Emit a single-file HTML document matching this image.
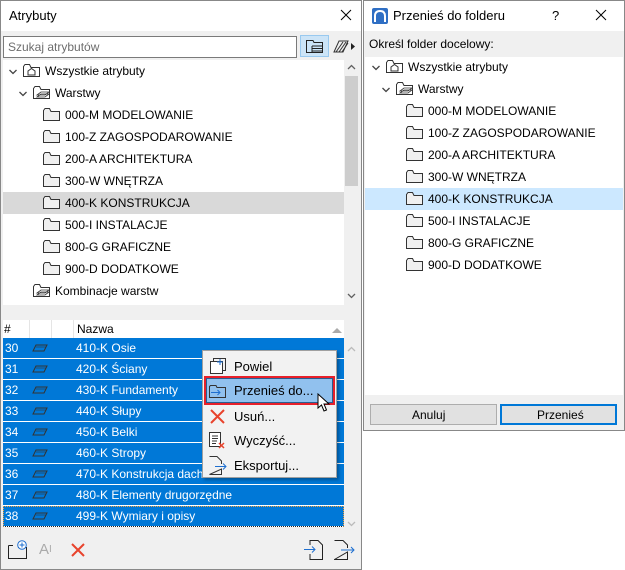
<!DOCTYPE html>
<html><head><meta charset="utf-8"><style>
*{margin:0;padding:0;box-sizing:border-box}
body{width:625px;height:570px;background:#fff;position:relative;overflow:hidden;font-family:"Liberation Sans",sans-serif;font-size:12px;color:#000}
.a{position:absolute}
.t{position:absolute;white-space:nowrap;line-height:14px}
.fold{position:absolute;width:17px;height:13px}
</style></head><body>
<svg width="0" height="0" style="position:absolute"><defs>
<symbol id="f" viewBox="0 0 17 13"><path d="M0.5 2.5V12.5H16.5V3.5H8L6.5 0.5H2L0.5 2.5Z" fill="#f0f0f0" stroke="#333"/></symbol>
<symbol id="fh" viewBox="0 0 17 13"><path d="M0.5 2.5V12.5H16.5V3.5H8L6.5 0.5H2L0.5 2.5Z" fill="#fff" stroke="#333"/><path d="M5 11V7L8.5 4.5L12 7V11Z" fill="none" stroke="#333"/></symbol>
<symbol id="fw" viewBox="0 0 17 13"><path d="M0.5 2.5V12.5H16.5V3.5H8L6.5 0.5H2L0.5 2.5Z" fill="#fff" stroke="#333"/><path d="M4 9L8 6H16L12 9ZM4 11L8 8H16L12 11Z" fill="#fff" stroke="#333" stroke-width=".8"/></symbol>
<symbol id="ch" viewBox="0 0 10 10"><path d="M1.5 3L5 6.5L8.5 3" fill="none" stroke="#444" stroke-width="1.3"/></symbol>
<symbol id="ly" viewBox="0 0 16 8"><path d="M4 1H15L12 7H1Z" fill="none" stroke="#333" stroke-width="1"/><path d="M4 3H14" stroke="#333" stroke-width=".6"/></symbol>
</defs></svg>

<!-- LEFT WINDOW -->
<div class="a" style="left:0;top:0;width:362px;height:570px;border:1px solid #888;background:#f0f0f0"></div>
<div class="a" style="left:1;top:1px;left:1px;width:360px;height:30px;background:#fff"></div>
<div class="t" style="left:9px;top:9px;font-size:13px">Atrybuty</div>
<svg class="a" style="left:340px;top:9px" width="12" height="12"><path d="M1 1L11 11M11 1L1 11" stroke="#000" stroke-width="1"/></svg>
<div class="a" style="left:3px;top:36px;width:294px;height:22px;background:#fff;border:1px solid #7a7a7a"></div>
<div class="t" style="left:8px;top:40px;color:#6d6d6d">Szukaj atrybutów</div>
<div class="a" style="left:300px;top:35px;width:29px;height:22px;background:#cce4f7;border:1px solid #99c9ef"></div>
<svg class="a" style="left:306px;top:39px" width="18" height="15"><path d="M0.5 1.5V13.5H16.5V3.5H8L7 1.5Z" fill="none" stroke="#222"/><path d="M6 7H16M6 9.5H16M6 12H16M6 7V13" stroke="#222"/></svg>
<svg class="a" style="left:333px;top:39px" width="28" height="15"><path d="M1 13L6 2H15L10 13Z" fill="none" stroke="#333"/><path d="M3 13L10 3M6 13L13 3M9 13L15 4" stroke="#333"/><path d="M18 4L22 7.5L18 11Z" fill="#222"/></svg>
<div class="a" style="left:3px;top:60px;width:341px;height:245px;background:#fff"></div>
<div class="a" style="left:344px;top:60px;width:15px;height:245px;background:#f0f0f0"></div>
<div class="a" style="left:345px;top:76px;width:13px;height:110px;background:#cdcdcd"></div>
<svg class="a" style="left:347px;top:64px" width="9" height="7"><path d="M1 5L4.5 1.5L8 5" fill="none" stroke="#606060" stroke-width="1.3"/></svg>
<svg class="a" style="left:347px;top:292px" width="9" height="7"><path d="M1 2L4.5 5.5L8 2" fill="none" stroke="#606060" stroke-width="1.3"/></svg>
<div class="a" style="left:3px;top:192px;width:341px;height:22px;background:#d9d9d9"></div>

<svg class="a" style="left:8px;top:67px" width="10" height="10"><use href="#ch"/></svg>
<svg class="fold" style="left:23px;top:64px"><use href="#fh"/></svg>
<div class="t" style="left:45px;top:64px">Wszystkie atrybuty</div>
<svg class="a" style="left:18px;top:89px" width="10" height="10"><use href="#ch"/></svg>
<svg class="fold" style="left:33px;top:86px"><use href="#fw"/></svg>
<div class="t" style="left:55px;top:86px">Warstwy</div>
<svg class="fold" style="left:43px;top:108px"><use href="#f"/></svg><div class="t" style="left:65px;top:108px">000-M MODELOWANIE</div>
<svg class="fold" style="left:43px;top:130px"><use href="#f"/></svg><div class="t" style="left:65px;top:130px">100-Z ZAGOSPODAROWANIE</div>
<svg class="fold" style="left:43px;top:152px"><use href="#f"/></svg><div class="t" style="left:65px;top:152px">200-A ARCHITEKTURA</div>
<svg class="fold" style="left:43px;top:174px"><use href="#f"/></svg><div class="t" style="left:65px;top:174px">300-W WNĘTRZA</div>
<svg class="fold" style="left:43px;top:196px"><use href="#f"/></svg><div class="t" style="left:65px;top:196px">400-K KONSTRUKCJA</div>
<svg class="fold" style="left:43px;top:218px"><use href="#f"/></svg><div class="t" style="left:65px;top:218px">500-I INSTALACJE</div>
<svg class="fold" style="left:43px;top:240px"><use href="#f"/></svg><div class="t" style="left:65px;top:240px">800-G GRAFICZNE</div>
<svg class="fold" style="left:43px;top:262px"><use href="#f"/></svg><div class="t" style="left:65px;top:262px">900-D DODATKOWE</div>
<svg class="fold" style="left:33px;top:284px"><use href="#fw"/></svg><div class="t" style="left:55px;top:284px">Kombinacje warstw</div>

<!-- table -->
<div class="a" style="left:3px;top:320px;width:341px;height:207px;background:#fff"></div>
<div class="a" style="left:344px;top:320px;width:15px;height:207px;background:#f0f0f0"></div>
<svg class="a" style="left:347px;top:346px" width="9" height="7"><path d="M1 5L4.5 1.5L8 5" fill="none" stroke="#bbb" stroke-width="1.3"/></svg>
<svg class="a" style="left:347px;top:407px;top:438px" width="0" height="0"></svg>
<svg class="a" style="left:347px;top:520px" width="9" height="7"><path d="M1 2L4.5 5.5L8 2" fill="none" stroke="#bbb" stroke-width="1.3"/></svg>
<div class="a" style="left:29px;top:320px;width:1px;height:18px;background:#e5e5e5"></div>
<div class="a" style="left:51px;top:320px;width:1px;height:18px;background:#e5e5e5"></div>
<div class="a" style="left:73px;top:320px;width:1px;height:18px;background:#e5e5e5"></div>
<div class="t" style="left:4px;top:322px">#</div>
<div class="t" style="left:77px;top:322px">Nazwa</div>
<svg class="a" style="left:332px;top:327px" width="10" height="6"><path d="M0 6L5 1L10 6Z" fill="#aaa"/></svg>

<div id="rows"></div>
<div class="a" style="left:3px;top:338px;width:341px;height:189px;background:repeating-linear-gradient(#0078d7 0,#0078d7 20px,#fff 20px,#fff 21px)"></div>
<div class="a" style="left:3px;top:506px;width:341px;height:21px;border:1px dotted #f0a040;border-bottom-color:#222"></div>
<div style="color:#fff">
<div class="t" style="left:5px;top:341px;color:#fff">30</div><div class="t" style="left:76px;top:341px;color:#fff">410-K Osie</div>
<div class="t" style="left:5px;top:362px;color:#fff">31</div><div class="t" style="left:76px;top:362px;color:#fff">420-K Ściany</div>
<div class="t" style="left:5px;top:383px;color:#fff">32</div><div class="t" style="left:76px;top:383px;color:#fff">430-K Fundamenty</div>
<div class="t" style="left:5px;top:404px;color:#fff">33</div><div class="t" style="left:76px;top:404px;color:#fff">440-K Słupy</div>
<div class="t" style="left:5px;top:425px;color:#fff">34</div><div class="t" style="left:76px;top:425px;color:#fff">450-K Belki</div>
<div class="t" style="left:5px;top:446px;color:#fff">35</div><div class="t" style="left:76px;top:446px;color:#fff">460-K Stropy</div>
<div class="t" style="left:5px;top:467px;color:#fff">36</div><div class="t" style="left:76px;top:467px;color:#fff">470-K Konstrukcja dachu</div>
<div class="t" style="left:5px;top:488px;color:#fff">37</div><div class="t" style="left:76px;top:488px;color:#fff">480-K Elementy drugorzędne</div>
<div class="t" style="left:5px;top:509px;color:#fff">38</div><div class="t" style="left:76px;top:509px;color:#fff">499-K Wymiary i opisy</div>
</div>
<svg class="a" style="left:32px;top:344px" width="16" height="8"><use href="#ly"/></svg>
<svg class="a" style="left:32px;top:365px" width="16" height="8"><use href="#ly"/></svg>
<svg class="a" style="left:32px;top:386px" width="16" height="8"><use href="#ly"/></svg>
<svg class="a" style="left:32px;top:407px" width="16" height="8"><use href="#ly"/></svg>
<svg class="a" style="left:32px;top:428px" width="16" height="8"><use href="#ly"/></svg>
<svg class="a" style="left:32px;top:449px" width="16" height="8"><use href="#ly"/></svg>
<svg class="a" style="left:32px;top:470px" width="16" height="8"><use href="#ly"/></svg>
<svg class="a" style="left:32px;top:491px" width="16" height="8"><use href="#ly"/></svg>
<svg class="a" style="left:32px;top:512px" width="16" height="8"><use href="#ly"/></svg>

<!-- bottom toolbar -->
<svg class="a" style="left:8px;top:540px" width="20" height="20"><path d="M0.5 5.5V18.5H18.5V7.5H10" fill="none" stroke="#222"/><path d="M0.5 5.5H5" stroke="#222"/><circle cx="14" cy="5" r="4.3" fill="#fff" stroke="#1e6fd0"/><path d="M14 2.5V7.5M11.5 5H16.5" stroke="#1e6fd0"/></svg>
<div class="t" style="left:39px;top:543px;color:#aaa;font-size:15px">A<span style="font-size:10px;vertical-align:top">I</span></div>
<svg class="a" style="left:71px;top:543px" width="14" height="14"><path d="M1 1L13 13M13 1L1 13" stroke="#e8432c" stroke-width="2"/></svg>
<svg class="a" style="left:304px;top:540px" width="20" height="20"><path d="M6 5V0.5H14L18.5 5V19.5H6V14" fill="none" stroke="#222"/><path d="M0 9.5H11M8 6.5L11 9.5L8 12.5" fill="none" stroke="#1e6fd0"/></svg>
<svg class="a" style="left:334px;top:540px" width="22" height="20"><path d="M0.5 0.5H9L13.5 5V8M13.5 12V19.5H0.5Z" fill="none" stroke="#222"/><path d="M7 10H20M17 7L20 10L17 13" fill="none" stroke="#1e6fd0"/></svg>

<!-- context menu -->
<div class="a" style="left:202px;top:350px;width:135px;height:128px;background:#f2f2f2;border:1px solid #a0a0a0;box-shadow:2px 2px 3px rgba(0,0,0,.3)"></div>
<div class="a" style="left:204px;top:376px;width:131px;height:29px;border:2px solid #e8202a"></div>
<div class="a" style="left:206px;top:378px;width:127px;height:25px;background:#91c1ee;border:1px solid #2a5d8f"></div>
<svg class="a" style="left:210px;top:358px" width="16" height="16"><path d="M3.5 3.5V0.5H15.5V12.5H12.5" fill="none" stroke="#333"/><rect x="0.5" y="3.5" width="12" height="12" fill="#fff" stroke="#333"/><path d="M10 1V7M7 4H13" stroke="#1e6fd0"/></svg>
<div class="t" style="left:234px;top:360px;font-size:13px">Powiel</div>
<svg class="a" style="left:209px;top:384px" width="17" height="14"><path d="M0.5 2.5V13.5H16.5V3.5H8L7 1.5H1.5Z" fill="none" stroke="#333"/><path d="M2 8.5H11M8.5 6L11 8.5L8.5 11" fill="none" stroke="#1e6fd0"/></svg>
<div class="t" style="left:234px;top:384px;font-size:13px">Przenieś do...</div>
<svg class="a" style="left:317px;top:393px" width="14" height="20"><path d="M1 1V15L4.5 12L7 18L9.5 17L7 11H12Z" fill="#fff" stroke="#000"/></svg>
<svg class="a" style="left:210px;top:409px" width="15" height="15"><path d="M1 1L14 14M14 1L1 14" stroke="#e8432c" stroke-width="2"/></svg>
<div class="t" style="left:234px;top:410px;font-size:13px">Usuń...</div>
<svg class="a" style="left:209px;top:432px" width="17" height="17"><rect x="0.5" y="0.5" width="11" height="14" fill="#fff" stroke="#333"/><path d="M3 4H9M3 6.5H9M3 9H8M3 11.5H7" stroke="#333"/><path d="M10 11L15 16M15 11L10 16" stroke="#e8432c" stroke-width="1.5"/></svg>
<div class="t" style="left:234px;top:434px;font-size:13px">Wyczyść...</div>
<svg class="a" style="left:209px;top:456px" width="18" height="19"><path d="M0.5 0.5H8L12.5 5V8M12.5 13V18.5H0.5Z" fill="none" stroke="#333"/><path d="M6 10.5H17M14 7.5L17 10.5L14 13.5" fill="none" stroke="#1e6fd0"/></svg>
<div class="t" style="left:234px;top:459px;font-size:13px">Eksportuj...</div>

<!-- RIGHT WINDOW -->
<div class="a" style="left:363px;top:0;width:262px;height:431px;border:1px solid #888;background:#f0f0f0"></div>
<div class="a" style="left:364px;top:1px;width:260px;height:30px;background:#fff"></div>
<svg class="a" style="left:372px;top:8px" width="16" height="16"><rect width="16" height="16" rx="2" fill="#2f6fc4"/><path d="M3 14V8Q3 3 8 3Q13 3 13 8V14" fill="none" stroke="#fff" stroke-width="2"/></svg>
<div class="t" style="left:393px;top:9px;font-size:13px">Przenieś do folderu</div>
<div class="t" style="left:552px;top:9px;font-size:13px">?</div>
<svg class="a" style="left:595px;top:9px" width="12" height="12"><path d="M1 1L11 11M11 1L1 11" stroke="#000" stroke-width="1"/></svg>
<div class="t" style="left:369px;top:37px">Określ folder docelowy:</div>
<div class="a" style="left:365px;top:57px;width:258px;height:338px;background:#fff"></div>
<div class="a" style="left:365px;top:188px;width:258px;height:22px;background:#cce8ff"></div>
<svg class="a" style="left:371px;top:63px" width="10" height="10"><use href="#ch"/></svg>
<svg class="fold" style="left:386px;top:60px"><use href="#fh"/></svg>
<div class="t" style="left:408px;top:60px">Wszystkie atrybuty</div>
<svg class="a" style="left:381px;top:85px" width="10" height="10"><use href="#ch"/></svg>
<svg class="fold" style="left:396px;top:82px"><use href="#fw"/></svg>
<div class="t" style="left:418px;top:82px">Warstwy</div>
<svg class="fold" style="left:406px;top:104px"><use href="#f"/></svg><div class="t" style="left:428px;top:104px">000-M MODELOWANIE</div>
<svg class="fold" style="left:406px;top:126px"><use href="#f"/></svg><div class="t" style="left:428px;top:126px">100-Z ZAGOSPODAROWANIE</div>
<svg class="fold" style="left:406px;top:148px"><use href="#f"/></svg><div class="t" style="left:428px;top:148px">200-A ARCHITEKTURA</div>
<svg class="fold" style="left:406px;top:170px"><use href="#f"/></svg><div class="t" style="left:428px;top:170px">300-W WNĘTRZA</div>
<svg class="fold" style="left:406px;top:192px"><use href="#f"/></svg><div class="t" style="left:428px;top:192px">400-K KONSTRUKCJA</div>
<svg class="fold" style="left:406px;top:214px"><use href="#f"/></svg><div class="t" style="left:428px;top:214px">500-I INSTALACJE</div>
<svg class="fold" style="left:406px;top:236px"><use href="#f"/></svg><div class="t" style="left:428px;top:236px">800-G GRAFICZNE</div>
<svg class="fold" style="left:406px;top:258px"><use href="#f"/></svg><div class="t" style="left:428px;top:258px">900-D DODATKOWE</div>
<div class="a" style="left:370px;top:404px;width:127px;height:21px;background:#e1e1e1;border:1px solid #adadad"></div>
<div class="t" style="left:412px;top:408px">Anuluj</div>
<div class="a" style="left:500px;top:404px;width:117px;height:21px;background:#e1e1e1;border:2px solid #0078d7"></div>
<div class="t" style="left:537px;top:408px">Przenieś</div>
</body></html>
